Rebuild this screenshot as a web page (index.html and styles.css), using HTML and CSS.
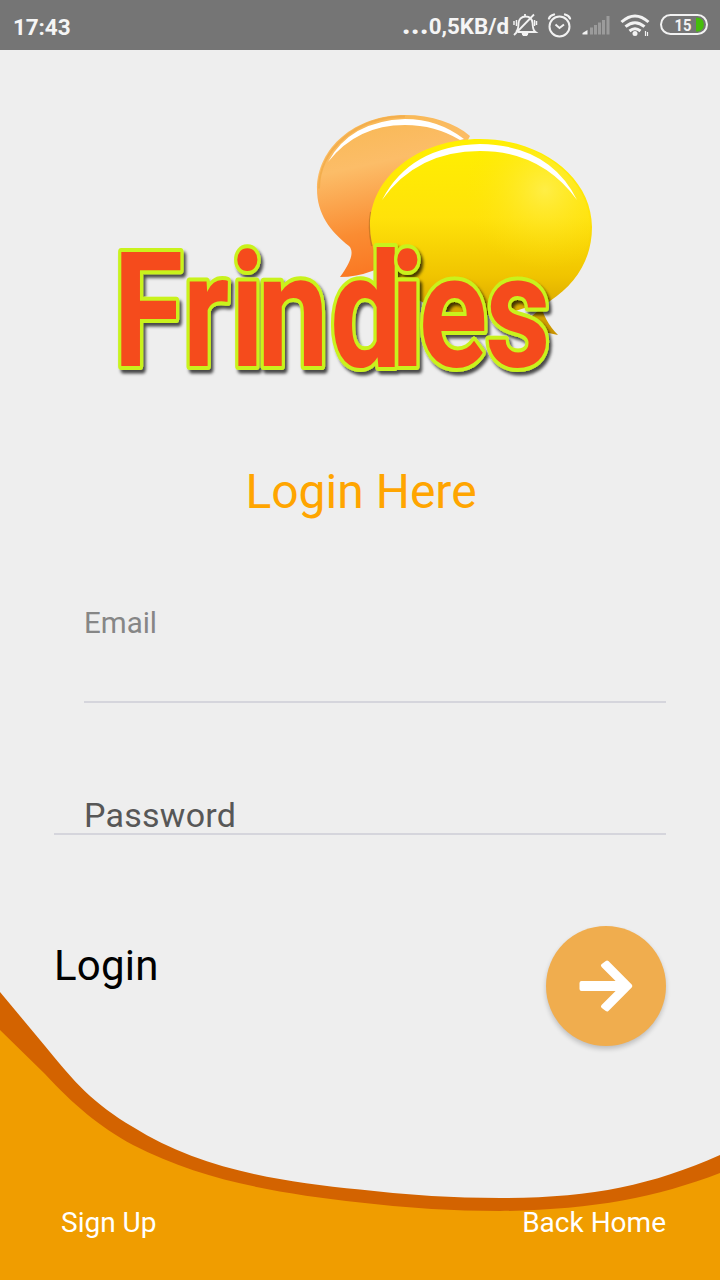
FILE: index.html
```
<!DOCTYPE html>
<html lang="en">
<head>
<meta charset="utf-8">
<title>Frindies</title>
<link rel="stylesheet" href="styles.css">
</head>
<body>
<div class="screen">
  <header class="status">
    <span class="time">17:43</span>
    <span class="speed"><span class="dots">...</span>0,5KB/d</span>
    <svg class="status-icons" viewBox="510 0 210 50" fill="none" stroke="#f2f2f2" stroke-width="1.8">
      <path d="M518 32h17.500c-3-2-2.500-5-3-9-.4-4-3-6.500-7-6.500s-7 3-7 7c0 4 0 6-2.500 8.500M534 14.500 514 35M525 14v2"/>
      <path d="M522 33.500h6l-1 2h-4z" fill="#f2f2f2" stroke-width="1"/>
      <path d="M516.500 20v6M514 21v4M534.500 20v6M536.500 21v4" stroke-width="1.500"/>
      <circle cx="559.500" cy="26.500" r="10" stroke-width="2"/>
      <path d="m555.500 24.500 4 3.500 4.500-3.500" stroke-width="2"/>
      <path d="M549 18.500q1-3 5-4M570 18.500q-1-3-5-4" stroke-width="2.300" stroke-linecap="round"/>
      <path d="M582.500 34.500v-1.500l5-3v4.500z" fill="#f2f2f2" stroke="none"/>
      <path d="M591.500 34.500v-7M595.500 34.500V25M599.500 34.500v-12M603.500 34.500V20M608 34.500V16" stroke="#9b9b9b" stroke-width="3"/>
      <path d="M621.500 22q13.500-12 27 0M625.500 26.700q9.500-8 19 0M629.500 31q5.500-4.500 11 0" stroke-width="3"/>
      <circle cx="635" cy="33.500" r="2.500" fill="#f2f2f2" stroke="none"/>
      <path d="M645.500 31v5M647.500 32v4" stroke-width="1.200"/>
      <rect x="661" y="15" width="46" height="19" rx="9.500" stroke-width="2"/>
      <path d="M696 17.800h2.500a7 7 0 0 1 0 13.600H696z" fill="#46bd0b" stroke="none"/>
      <text class="battery" x="674.500" y="31" textLength="17" lengthAdjust="spacingAndGlyphs">15</text>
    </svg>
  </header>

  <main class="content">
    <svg class="logo" viewBox="100 100 520 300" role="img" aria-label="Frindies">
      <defs>
        <linearGradient id="orange" x1=".3" y1="0" x2=".5" y2="1"><stop offset="0" stop-color="#f8b854"/><stop offset=".3" stop-color="#fcbd68"/><stop offset=".7" stop-color="#fa8c32"/><stop offset="1" stop-color="#fa7420"/></linearGradient>
        <linearGradient id="yellow" x1=".5" y1="0" x2=".5" y2="1"><stop offset="0" stop-color="#fff000"/><stop offset=".4" stop-color="#ffe20a"/><stop offset=".7" stop-color="#f0c400"/><stop offset="1" stop-color="#c99200"/></linearGradient>
        <radialGradient id="glow" gradientUnits="userSpaceOnUse" cx="545" cy="190" r="80"><stop offset="0" stop-color="#fff05b" stop-opacity=".75"/><stop offset="1" stop-color="#ffe30a" stop-opacity="0"/></radialGradient>
        <filter id="shadow" x="-10%" y="-10%" width="120%" height="125%"><feDropShadow dx="2.500" dy="3.500" stdDeviation="1.800" flood-color="#000" flood-opacity=".7"/></filter>
      </defs>
      <path d="M405 115C355 115 317 148 317 189c0 25 13 42 32 57 5 5 3 15-9 31q40 0 75-35l55-106c-15-13-38-21-65-21z" fill="url(#orange)"/>
      <path d="M405 116.500c-48 0-86 33-86 72" fill="none" stroke="#f3ae4d" stroke-width="2"/>
      <path d="M328 162q22-41 77-43 33 0 59 20l-4 1q-25-15-55-15-48 0-77 37z" fill="#fff"/>
      <path d="M371 212q-3 16 1 34" fill="none" stroke="#a26b16" stroke-width="2" opacity=".5"/>
      <path d="M480 139c-62 0-110 38-110 87 0 50 49 89 110 89 24 0 45-5 60-14 2 13 9 25 18 34-13-2-23-7-31-15l23-19c26-17 42-42 42-74 0-49-50-88-112-88z" fill="url(#yellow)"/>
      <ellipse cx="481" cy="227" rx="109" ry="87" fill="url(#glow)"/>
      <path d="M382 200q28-54 98-56 70 1 97 56-36-49-97-49-63 0-98 49z" fill="#fff"/>
      <g filter="url(#shadow)">
        <text class="wordmark" transform="scale(.8 1)" y="366" x="141.500 228.500 288 321.500 412.500 488 523.500 606.500">Frindies</text>
      </g>
    </svg>
    <h1 class="title">Login Here</h1>
    <form class="form">
      <label class="field email">Email</label>
      <label class="field password">Password</label>
      <div class="submit">
        <span class="login">Login</span>
        <button class="go" type="button" aria-label="Login">
          <svg viewBox="0 0 120 120" fill="#fff" stroke="#fff" stroke-width="4" stroke-linejoin="round"><path d="M35.500 57H74.500L57 39.500 61 36.500 84.300 60 61 83.500 57 80.500 74.500 63H35.500z"/></svg>
        </button>
      </div>
    </form>
  </main>

  <footer class="footer">
    <svg class="wave" viewBox="0 980 720 300">
      <path d="M0 992 45 1046C74 1082 94 1104 133 1127 196 1167 276 1182 360 1189.500 Q430 1198 500 1198 C590 1198 650 1186 720 1155V1280H0z" fill="#d36300"/>
      <path d="M0 1030 45 1074C74 1105 98 1126 133 1145 203 1181 277 1193 360 1202.500 Q430 1211 500 1211 C590 1210 655 1198 720 1173V1280H0z" fill="#f09d00"/>
    </svg>
    <nav class="links"><span>Sign Up</span><span>Back Home</span></nav>
  </footer>
</div>
</body>
</html>
```
FILE: styles.css
```
* { box-sizing: border-box; }
body { margin: 0; background: #eee; font-family: Roboto, sans-serif; }
.screen { width: 720px; height: 1280px; display: flex; flex-direction: column; overflow: hidden; background: #eee; }
.status { height: 50px; flex: none; display: flex; align-items: center; background: #757575; color: #f5f5f5; font-size: 22.500px; font-weight: 700; line-height: 48px; padding-left: 13px; }
.time { flex: 1; padding-top: 4px; letter-spacing: -.1px; }
.speed { white-space: nowrap; padding-top: 2px; margin-right: 1px; font-size: 22.300px; }
.dots { font-size: 31px; line-height: 30px; }
.status-icons { width: 210px; height: 50px; flex: none; }
.battery { font: 700 17px Roboto, sans-serif; fill: #f2f2f2; stroke: none; }
.content { height: 930px; flex: none; display: flex; flex-direction: column; padding: 50px 54px 0; }
.logo { width: 520px; height: 300px; margin-left: 46px; flex: none; overflow: visible; }
.wordmark { font: 700 159px Roboto, sans-serif; fill: #f54c1c; stroke: #c9f21c; stroke-width: 8px; stroke-linejoin: round; paint-order: stroke; }
.title { margin: 62px 0 0 2px; height: 60px; line-height: 60px; font-size: 48px; font-weight: 400; color: #ffa500; text-align: center; }
.form { display: flex; flex-direction: column; }
.field { display: block; border-bottom: 2px solid #d5d5dc; }
.email { margin: 81px 0 0 30px; height: 100px; line-height: 40px; font-size: 29.500px; color: #868686; }
.password { margin-top: 92px; height: 40px; padding-left: 30px; line-height: 40px; font-size: 34px; letter-spacing: .25px; color: #575757; }
.submit { display: flex; justify-content: space-between; margin-top: 91px; }
.login { padding-top: 15px; line-height: 50px; font-size: 42px; letter-spacing: .2px; color: #000; }
.go { width: 120px; height: 120px; padding: 0; border: 0; border-radius: 50%; background: #f0ad4e; box-shadow: 0 3px 5px rgba(0,0,0,.2); }
.go svg { display: block; width: 120px; height: 120px; }
.footer { height: 300px; flex: none; display: grid; }
.wave, .links { grid-area: 1 / 1; }
.wave { width: 720px; height: 300px; }
.links { display: flex; justify-content: space-between; align-items: flex-end; padding: 0 54px 37px 61px; font-size: 28px; line-height: 40px; color: #fff; z-index: 1; }
```
